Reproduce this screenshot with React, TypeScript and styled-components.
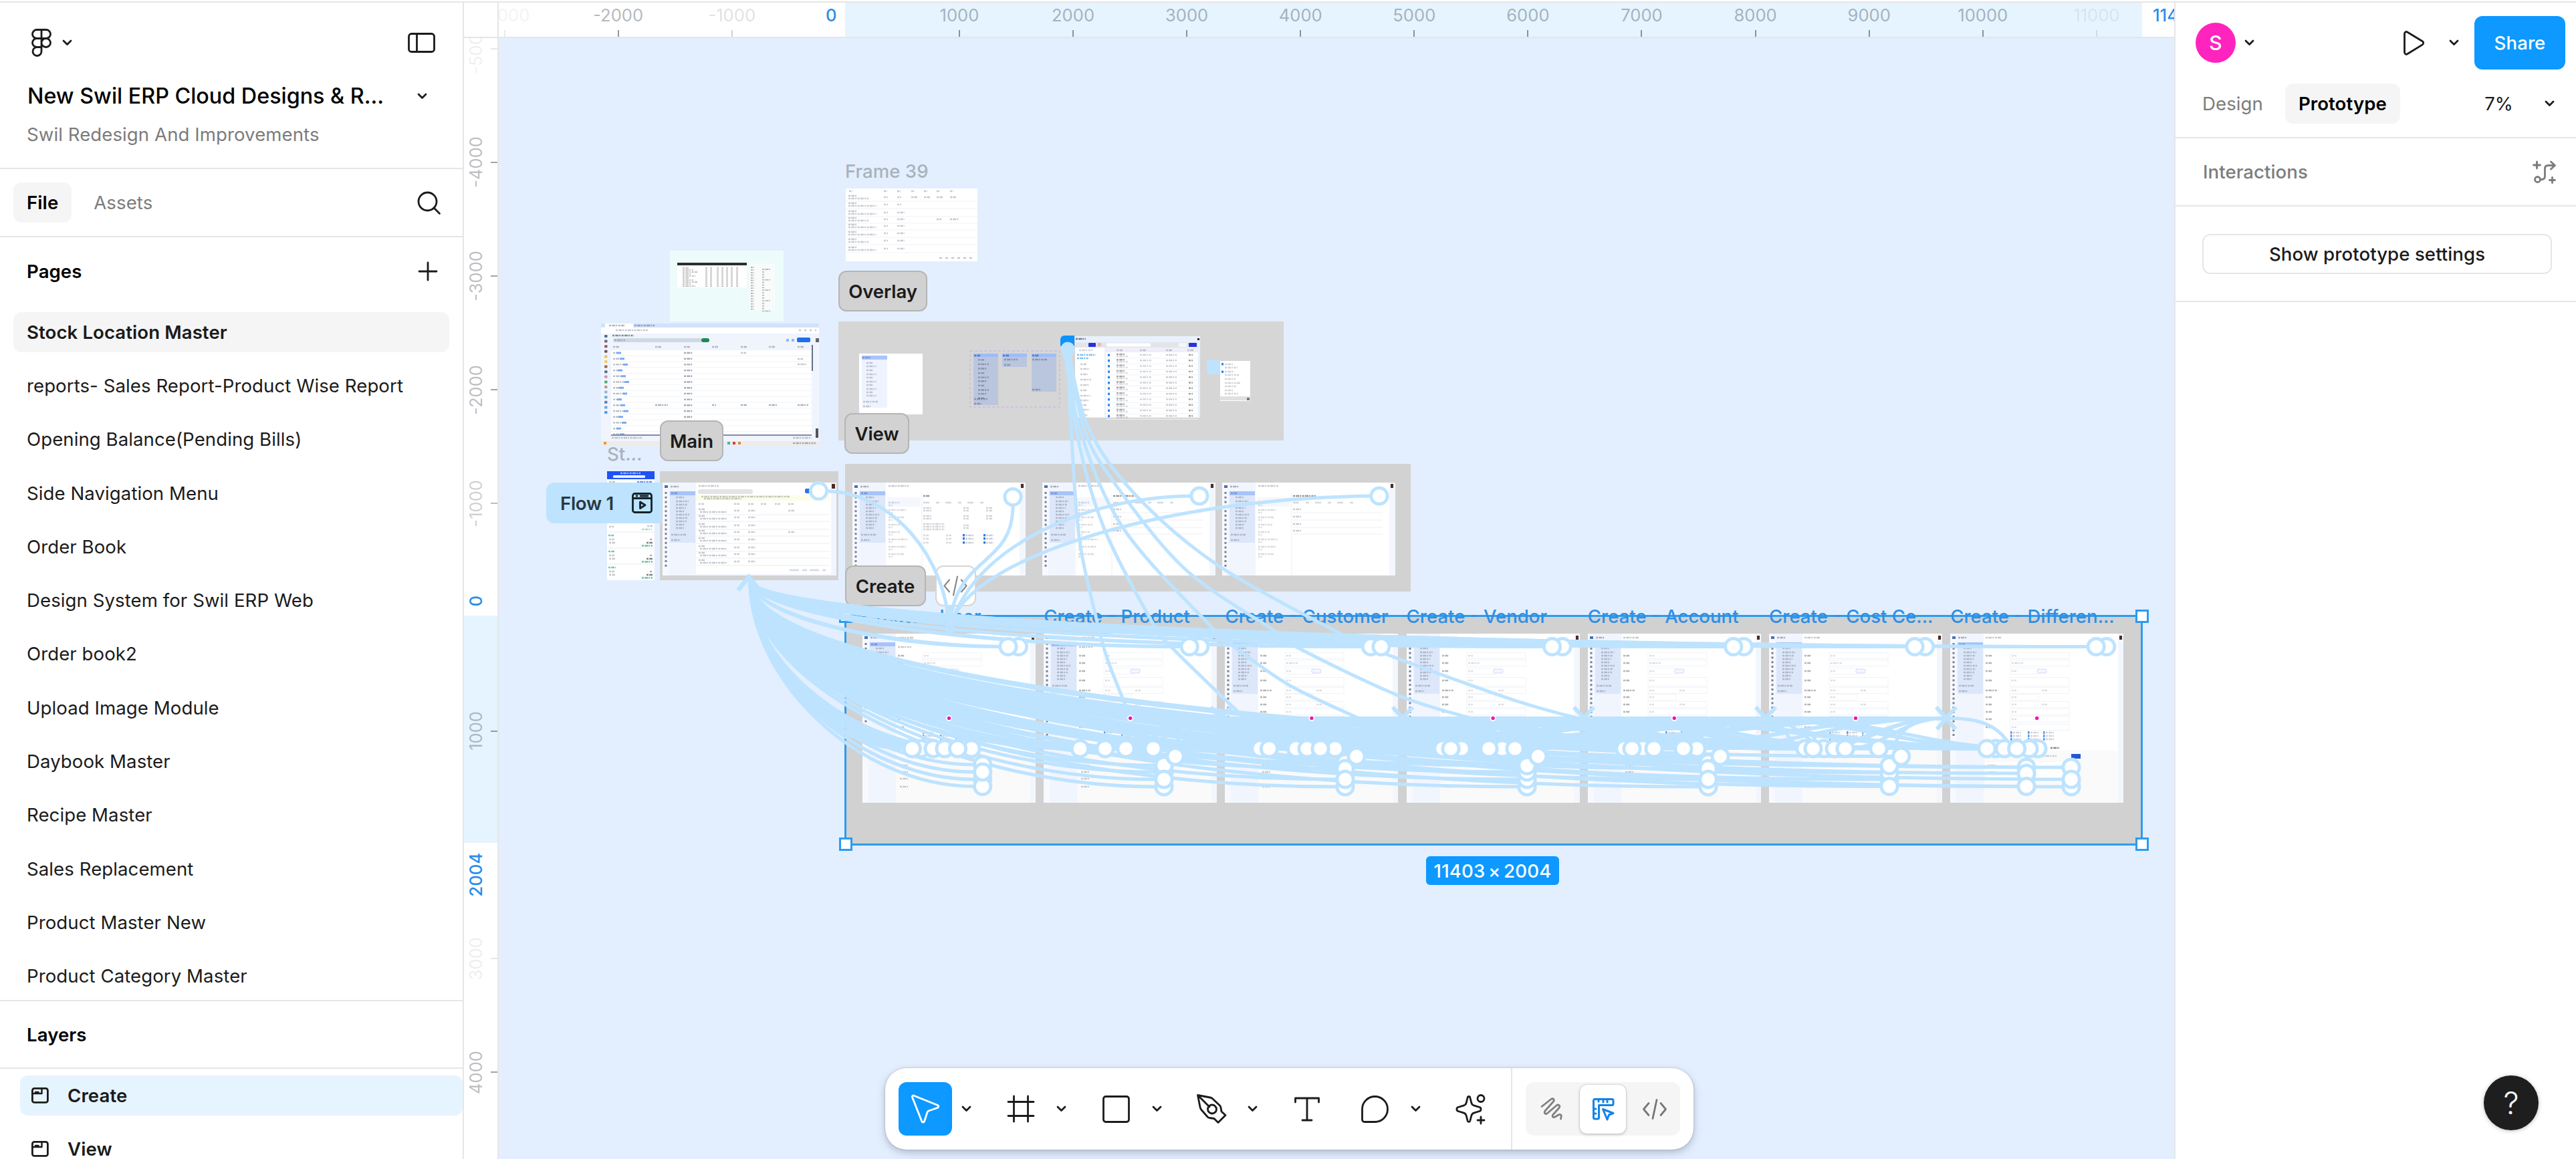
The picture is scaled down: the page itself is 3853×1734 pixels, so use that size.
import React from "react";
import styled, { createGlobalStyle, css } from "styled-components";

const Global = createGlobalStyle`
  *, *::before, *::after { box-sizing: border-box; }
  body { margin: 0; background: #fff; overflow: hidden; }
  button { font: inherit; letter-spacing: inherit; color: inherit; border: 0; padding: 0; background: none; }
`;

const INK = "#1b1b1b";
const MUTED = "#7c7c7c";
const LINE = "#e6e6e6";
const BLUE = "#0d99ff";
const WIRE = "#bde3ff";

/* ---------- shell ---------- */

const Shell = styled.div`
  width: 3853px;
  height: 1734px;
  display: flex;
  flex-direction: column;
  overflow: hidden;
  font-family: Inter, "Liberation Sans", sans-serif;
  font-size: 27.6px;
  letter-spacing: 0.07px;
  color: ${INK};
  background: #fff;
`;

const TopEdge = styled.div`
  height: 4px;
  flex: none;
  border-bottom: 2px solid ${LINE};
`;

const Columns = styled.div`
  flex: 1;
  min-height: 0;
  display: grid;
  grid-template-columns: 694px 2558px 601px;
`;

/* ---------- left panel ---------- */

const LeftPanel = styled.aside`
  display: flex;
  flex-direction: column;
  min-height: 0;
  overflow: hidden;
  border-right: 2px solid ${LINE};
`;

const FileHeader = styled.header`
  height: 249px;
  flex: none;
  padding: 0 41px 0 40px;
  border-bottom: 2px solid ${LINE};
`;

const HeaderRow = styled.div<{ $h: number }>`
  height: ${(p) => p.$h}px;
  display: flex;
  align-items: center;
  justify-content: space-between;
`;

const LogoButton = styled.button`
  display: flex;
  align-items: center;
  gap: 17px;
  padding-left: 7px;
`;

const FileTitle = styled.h1`
  margin: 0 0 0 1px;
  font-size: 32.3px;
  font-weight: 500;
  letter-spacing: 0;
  color: #000;
  white-space: nowrap;
`;

const ChevronSlot = styled.span<{ $r: number }>`
  display: flex;
  margin-right: ${(p) => p.$r}px;
`;

const Subtitle = styled.p`
  margin: 0;
  color: ${MUTED};
`;

const TabRow = styled.nav`
  height: 102px;
  flex: none;
  display: flex;
  align-items: center;
  padding: 0 33px 0 20px;
  border-bottom: 2px solid ${LINE};
`;

const Tab = styled.button<{ $active?: boolean }>`
  height: 60px;
  padding: 0 20px;
  margin-right: 13px;
  border-radius: 12px;
  color: ${MUTED};
  ${(p) =>
    p.$active &&
    css`
      background: #f5f5f5;
      color: #000;
      font-weight: 600;
    `}
`;

const Spacer = styled.span`
  flex: 1;
`;

const SectionTitle = styled.div<{ $h: number; $ruled?: boolean }>`
  height: ${(p) => p.$h}px;
  flex: none;
  display: flex;
  align-items: center;
  justify-content: space-between;
  padding: 0 38px 0 40px;
  font-weight: 600;
  color: #000;
  border-bottom: ${(p) => (p.$ruled ? `2px solid ${LINE}` : "0")};
`;

const PageList = styled.ul`
  list-style: none;
  margin: 0;
  padding: 0 20px;
  height: 1041px;
  flex: none;
  overflow: hidden;
  border-bottom: 2px solid ${LINE};
`;

const PageSlot = styled.li`
  height: 80.3px;
  padding-bottom: 1px;
  display: flex;
  align-items: center;
`;

const PageItem = styled.div<{ $active?: boolean }>`
  flex: 1;
  height: 60px;
  display: flex;
  align-items: center;
  padding: 0 20px;
  border-radius: 12px;
  white-space: nowrap;
  background: ${(p) => (p.$active ? "#f5f5f5" : "transparent")};
  font-weight: ${(p) => (p.$active ? 600 : 400)};
`;

const LayerList = styled.div`
  flex: none;
`;

const LayerSlot = styled.div`
  height: 80px;
  padding: 10px 0 10px 30px;
`;

const LayerItem = styled.div<{ $active?: boolean }>`
  height: 60px;
  display: flex;
  align-items: center;
  gap: 28px;
  padding-left: 17px;
  border-radius: 12px;
  font-weight: 600;
  background: ${(p) => (p.$active ? "#e5f4ff" : "transparent")};
`;

/* ---------- rulers and canvas ---------- */

const Center = styled.main`
  position: relative;
  min-width: 0;
  display: grid;
  grid-template-columns: 52px 1fr;
  grid-template-rows: 53px 1fr;
  overflow: hidden;
`;

const Corner = styled.div`
  border-right: 2px solid ${LINE};
  border-bottom: 2px solid ${LINE};
`;

const TopRuler = styled.div`
  position: relative;
  display: flex;
  overflow: hidden;
  border-bottom: 2px solid ${LINE};
  background: linear-gradient(to right, #fff 518px, #e5f4ff 518px, #e5f4ff 2458px, #fff 2458px);
`;

const SideRuler = styled.div`
  position: relative;
  display: flex;
  flex-direction: column;
  overflow: hidden;
  border-right: 2px solid ${LINE};
  background: linear-gradient(to bottom, #fff 864px, #e5f4ff 864px, #e5f4ff 1204px, #fff 1204px);
`;

const TopMark = styled.span<{ $fade: number; $first?: boolean }>`
  flex: none;
  width: 170.1px;
  margin-left: ${(p) => (p.$first ? "-76.5px" : "0")};
  display: flex;
  flex-direction: column;
  align-items: center;
  justify-content: space-between;
  padding-top: 3px;
  font-size: 25.6px;
  line-height: 31px;
  letter-spacing: 0;
  color: rgba(60, 70, 80, ${(p) => p.$fade});
  &::after {
    content: "";
    width: 2px;
    height: 10px;
    background: rgba(0, 0, 0, ${(p) => p.$fade});
  }
`;

const SideMark = styled.span<{ $fade: number; $first?: boolean }>`
  flex: none;
  height: 170.2px;
  margin-top: ${(p) => (p.$first ? "-69.5px" : "0")};
  display: flex;
  align-items: center;
  justify-content: space-between;
  padding-left: 2px;
  font-size: 25.6px;
  line-height: 31px;
  letter-spacing: 0;
  color: rgba(60, 70, 80, ${(p) => p.$fade});
  &::after {
    content: "";
    width: 10px;
    height: 2px;
    background: rgba(0, 0, 0, ${(p) => p.$fade});
  }
`;

const Upright = styled.span`
  writing-mode: vertical-rl;
  transform: rotate(180deg);
`;

const TopEdgeValue = styled.span<{ $x: number }>`
  position: absolute;
  top: 3px;
  left: ${(p) => p.$x}px;
  font-size: 25.6px;
  line-height: 31px;
  letter-spacing: 0;
  font-weight: 500;
  color: #2a8ee6;
`;

const SideEdgeValue = styled(Upright)<{ $y: number }>`
  position: absolute;
  left: 2px;
  top: ${(p) => p.$y}px;
  font-size: 25.6px;
  line-height: 31px;
  letter-spacing: 0;
  font-weight: 500;
  color: #2a8ee6;
`;

const Canvas = styled.div`
  position: relative;
  overflow: hidden;
  background: #e3effe;
`;

const World = styled.div`
  position: absolute;
  left: -746px;
  top: -57px;
  width: 3853px;
  height: 1734px;
`;

type Box = { $x: number; $y: number; $w?: number; $h?: number };

const Node = styled.div<Box & { $bg?: string }>`
  position: absolute;
  left: ${(p) => p.$x}px;
  top: ${(p) => p.$y}px;
  width: ${(p) => p.$w}px;
  height: ${(p) => p.$h}px;
  background: ${(p) => p.$bg ?? "transparent"};
  svg { display: block; }
`;

const SectionPill = styled.div<Box & { $light?: boolean }>`
  position: absolute;
  left: ${(p) => p.$x}px;
  top: ${(p) => p.$y}px;
  width: ${(p) => p.$w}px;
  height: 61px;
  display: flex;
  align-items: center;
  justify-content: center;
  border-radius: 12px;
  border: 2px solid ${(p) => (p.$light ? "#d5d5d5" : "#b5b5b5")};
  background: ${(p) => (p.$light ? "#fff" : "#d2d2d2")};
  font-weight: 600;
  letter-spacing: -0.1px;
`;

const FrameLabel = styled.span<{ $x: number; $y: number; $on?: boolean }>`
  position: absolute;
  left: ${(p) => p.$x}px;
  top: ${(p) => p.$y}px;
  line-height: 36px;
  white-space: nowrap;
  color: ${(p) => (p.$on ? "#2f8fe3" : "#a9b2bd")};
  font-weight: 500;
  letter-spacing: 0;
`;

const FlowTag = styled.div`
  position: absolute;
  left: 817px;
  top: 722px;
  width: 173px;
  height: 61px;
  display: flex;
  align-items: center;
  justify-content: space-between;
  padding: 0 14px 0 21px;
  border-radius: 12px 0 0 12px;
  background: ${WIRE};
  font-weight: 600;
  letter-spacing: -0.3px;
  color: #2b3740;
`;

const Selection = styled.div`
  position: absolute;
  left: 1263px;
  top: 920px;
  width: 1942px;
  height: 345px;
  border: 3px solid #2b9cf0;
`;

const Handle = styled.i<{ $x: number; $y: number }>`
  position: absolute;
  left: ${(p) => p.$x - 10}px;
  top: ${(p) => p.$y - 10}px;
  width: 20px;
  height: 20px;
  background: #fff;
  border: 3px solid #2b9cf0;
`;

const SizeBadge = styled.div`
  position: absolute;
  left: 2133px;
  top: 1281px;
  width: 199px;
  height: 43px;
  display: flex;
  align-items: center;
  justify-content: center;
  border-radius: 6px;
  background: ${BLUE};
  color: #fff;
  font-weight: 500;
  letter-spacing: 0.15px;
  word-spacing: -3px;
  white-space: nowrap;
`;

/* ---------- toolbar ---------- */

const Toolbar = styled.div`
  position: absolute;
  left: 630px;
  top: 1594px;
  width: 1209px;
  height: 122px;
  display: flex;
  align-items: center;
  padding: 0 19px 0 20px;
  border-radius: 32px;
  background: #fff;
  box-shadow: 0 0 2px rgba(0, 0, 0, 0.25), 0 3px 8px rgba(0, 0, 0, 0.14), 0 6px 16px rgba(40, 70, 110, 0.14);
`;

const Tool = styled.button<{ $active?: boolean }>`
  width: 80px;
  height: 80px;
  flex: none;
  display: grid;
  place-items: center;
  border-radius: 12px;
  background: ${(p) => (p.$active ? BLUE : "transparent")};
`;

const ToolMenu = styled.button`
  width: 40px;
  height: 80px;
  display: grid;
  place-items: center;
  padding-left: 2px;
  margin-right: 22.7px;
`;

const ToolGap = styled.span<{ $w: number }>`
  width: ${(p) => p.$w}px;
  flex: none;
`;

const ToolDivider = styled.span`
  width: 2px;
  height: 122px;
  margin: 0 20px 0 21px;
  background: ${LINE};
`;

const ModeSwitch = styled.div`
  width: 231px;
  height: 80px;
  display: flex;
  align-items: center;
  padding: 0 4px;
  gap: 8px;
  border-radius: 12px;
  background: #f5f5f5;
`;

const Mode = styled.button<{ $active?: boolean }>`
  flex: 1;
  height: 73px;
  display: grid;
  place-items: center;
  border-radius: 10px;
  ${(p) =>
    p.$active &&
    css`
      background: #fff;
      box-shadow: 0 0 2px rgba(0, 0, 0, 0.3), 0 2px 5px rgba(0, 0, 0, 0.15);
    `}
`;

/* ---------- right panel ---------- */

const RightPanel = styled.aside`
  position: relative;
  border-left: 2px solid ${LINE};
`;

const PanelTop = styled.div`
  height: 203px;
  border-bottom: 2px solid ${LINE};
`;

const UserRow = styled.div`
  height: 120px;
  display: flex;
  align-items: center;
  padding: 0 16px 0 30px;
`;

const Avatar = styled.span`
  width: 60px;
  height: 60px;
  margin-right: 14px;
  display: grid;
  place-items: center;
  border-radius: 50%;
  background: #ff24bd;
  color: #fff;
  font-weight: 500;
  font-size: 30px;
`;

const ShareButton = styled.button`
  width: 136px;
  height: 80px;
  margin-left: 24px;
  border-radius: 12px;
  background: ${BLUE};
  color: #fff;
  font-weight: 500;
`;

const ModeRow = styled.div`
  display: flex;
  align-items: center;
  height: 62px;
  padding: 0 33px 0 20px;
`;

const Zoom = styled.span`
  margin-right: 48px;
`;

const PanelRow = styled.div`
  height: 102px;
  display: flex;
  align-items: center;
  justify-content: space-between;
  padding: 0 30px 0 41px;
  font-weight: 450;
  color: ${MUTED};
  border-bottom: 2px solid ${LINE};
`;

const SettingsRow = styled.div`
  height: 143px;
  padding: 41px 36px 0 40px;
  border-bottom: 2px solid ${LINE};
`;

const OutlineButton = styled.button`
  width: 100%;
  height: 60px;
  border: 2px solid ${LINE};
  border-radius: 12px;
  font-weight: 500;
`;

const Help = styled.button`
  position: absolute;
  right: 56px;
  bottom: 43px;
  width: 82px;
  height: 82px;
  display: grid;
  place-items: center;
  border-radius: 50%;
  background: #1e1e1e;
  color: #fff;
  font-size: 46px;
  font-weight: 300;
  box-shadow: 0 1px 6px rgba(0, 0, 0, 0.25);
`;

/* ---------- icons ---------- */

const Icon = ({ w, h, sw = 2.8, color = INK, children }: { w: number; h: number; sw?: number; color?: string; children: React.ReactNode }) => (
  <svg width={w} height={h} viewBox={`0 0 ${w} ${h}`} fill="none" stroke={color} strokeWidth={sw} strokeLinecap="round" strokeLinejoin="round" overflow="visible">
    {children}
  </svg>
);

const Chevron = () => (
  <Icon w={13} h={8} sw={2.8}>
    <path d="M1 1l5.500 5.500L12 1" />
  </Icon>
);

const FigmaMark = () => (
  <Icon w={30} h={42}>
    <path d="M15 1.500H8a6.500 6.500 0 0 0 0 13h7zM15 1.500h7a6.500 6.500 0 0 1 0 13h-7zM15 14.500H8a6.500 6.500 0 0 0 0 13h7zM15 21a6.500 6.500 0 0 1 6.500-6.500h.5a6.500 6.500 0 0 1 0 13h-.5A6.500 6.500 0 0 1 15 21zM15 27.500H8a6.500 6.500 0 1 0 7 6.500z" />
  </Icon>
);

const FrameGlyph = () => (
  <Icon w={26} h={24}>
    <rect x="1.400" y="1.400" width="23" height="21" rx="3" />
    <path d="M6 7h4.500M2 9h13.500V2" strokeWidth="2.400" />
  </Icon>
);

const Wand = () => (
  <Icon w={35} h={35} sw={2.800} color={MUTED}>
    <circle cx="7.500" cy="28.500" r="4" />
    <path d="M12 28.500h1.500c3 0 5-1.500 5-5V12.500c0-3.500 2-5 5-5h9M27.500 2l6 5.500-6 5.500" />
    <path d="M6.500 1l1.500 4.500L12.500 7 8 8.500 6.500 13 5 8.500.5 7 5 5.500z" fill={MUTED} stroke="none" />
    <path d="M6.500 2v10M1.500 7h10M29.500 25.500v8M25.500 29.500h8" />
  </Icon>
);

const CodeGlyph = ({ color = "#777", sw = 2.8 }: { color?: string; sw?: number }) => (
  <Icon w={36} h={31} color={color} sw={sw}>
    <path d="M9 6.500L1.500 15.500 9 24.500M27 6.500l7.500 9-7.500 9M21 1.500l-6 28" />
  </Icon>
);

/* ---------- miniature screens drawn on the canvas ---------- */

const Scribble = ({ x, y, w, c = "#5f6678", o = 0.5, h = 2.4, d = "3 1.2 5 1 2 1.500" }: { x: number; y: number; w: number; c?: string; o?: number; h?: number; d?: string }) => (
  <line x1={x} x2={x + w} y1={y} y2={y} stroke={c} strokeOpacity={o * 0.72} strokeWidth={h} strokeDasharray={d} />
);

const SideMenu = ({ dots }: { dots: number }) => (
  <g>
    <rect x="0" y="0" width="50" height="100%" fill="#f1f5fe" />
    <rect x="0" y="0" width="9" height="100%" fill="#f7f9ff" />
    <rect x="11" y="15" width="38" height="75" fill="#dde7fa" />
    <rect x="11" y="13" width="38" height="6" fill="#a7c3fa" />
    <Scribble x={13} y={16} w={10} c="#2b4a90" />
    {[22, 28, 33, 38, 43, 48, 53, 58, 63, 68].map((y, i) => (
      <Scribble key={y} x={20} y={y} w={12 + ((i * 7) % 9)} o={0.5} />
    ))}
    <Scribble x={13} y={78} w={22} o={0.5} />
    <Scribble x={13} y={86} w={14} o={0.5} />
    <Scribble x={12} y={6} w={13} c="#333" />
    <rect x="3" y="4" width="5" height="4" fill="#2c5d9b" opacity="0.85" />
    {Array.from({ length: dots }, (_, i) => (
      <rect key={i} x="3.500" y={14 + i * 6.800} width="3" height="3" fill="#33415c" opacity="0.65" />
    ))}
  </g>
);

const ViewScreen = ({ v }: { v: number }) => (
  <svg width="259" height="139">
    <rect width="259" height="139" fill="#fff" />
    <SideMenu dots={17} />
    <rect x="250" width="9" height="139" fill="#f3f6fd" />
    <rect x="252" y="2" width="4" height="6" fill="#4a2b24" />
    <Scribble x={54} y={5} w={30} />
    <line x1="104" x2="104" y1="16" y2="139" stroke="#eceef2" />
    <rect x="52" y="22" width="50" height="14" fill="#f5f7fc" />
    {[30, 41, 52, 63, 74, 85, 96, 107].map((y, i) => (
      <g key={y}>
        <Scribble x={54} y={y} w={16 + ((i * 11) % 14)} o={0.35} c={i === 0 ? "#2a6be0" : "#5f6678"} />
        <Scribble x={54} y={y + 4} w={6} o={0.3} />
      </g>
    ))}
    <Scribble x={106} y={20} w={v === 0 ? 10 : 34} o={0.7} c="#333" />
    <Scribble x={106} y={30} w={98} o={0.35} d="9 10 5 9" />
    {v === 0 ? (
      <g>
        {[38, 42, 50, 54, 62, 66, 70].map((y) => (
          <Scribble key={y} x={106} y={y} w={y > 60 ? 32 : 12} o={0.4} />
        ))}
        {[38, 42, 50, 54, 64, 68].map((y) => (
          <Scribble key={y} x={166} y={y} w={8} o={0.4} />
        ))}
        {[38, 42, 50, 54].map((y) => (
          <Scribble key={y} x={200} y={y} w={9} o={0.4} />
        ))}
        {[79, 84, 90].map((y) => (
          <g key={y}>
            <rect x="165" y={y - 2} width="3" height="3.500" fill="#2d7be0" />
            <Scribble x={169} y={y} w={13} o={0.45} />
            <rect x="196" y={y - 2} width="3" height="3.500" fill="#2d7be0" />
            <Scribble x={200} y={y} w={11} o={0.45} />
            <Scribble x={106} y={y} w={8} o={0.35} />
            <Scribble x={140} y={y} w={8} o={0.35} />
          </g>
        ))}
      </g>
    ) : (
      [40, 51, 62, 72].map((y) => (
        <g key={y}>
          <Scribble x={106} y={y} w={12} o={0.45} />
          <line x1="106" x2="240" y1={y + 5} y2={y + 5} stroke="#eef0f3" />
        </g>
      ))
    )}
  </svg>
);

const CreateScreen = ({ last }: { last?: boolean }) => (
  <svg width="259" height="253">
    <rect width="259" height="253" fill="#fff" />
    <rect y="175" width="259" height="78" fill="#fafafa" />
    <SideMenu dots={21} />
    <rect x="251" width="8" height="253" fill="#f3f6fd" />
    <rect x="253" y="3" width="4" height="6" fill="#4a2b24" />
    <Scribble x={53} y={6} w={24} />
    <Scribble x={53} y={20} w={20} />
    {[33, 44, 56, 70, 85, 95, 106, 117, 128, 140].map((y, i) => (
      <g key={y}>
        <Scribble x={53} y={y} w={i === 4 ? 18 : 10} o={0.5} c="#333" />
        <rect x="90" y={y - 4.500} width={i === 2 || i === 5 ? 42 : 88} height={i === 3 ? 13 : 9} fill="none" stroke="#f1f3f6" />
        <Scribble x={92} y={y} w={i === 1 ? 18 : 7} o={0.3} />
        {(i === 4 || i === 6) && <Scribble x={137} y={y} w={8} o={0.3} />}
      </g>
    ))}
    <rect x="130" y="53" width="14" height="6" rx="2" fill="#f4f6ff" stroke="#c6d2fa" strokeWidth="0.800" />
    {[148, 153, 158].map((y) => (
      <g key={y}>
        {[90, 116, 139].map((x) => (
          <g key={x}>
            <rect x={x} y={y - 2} width="2.500" height="4" fill="#3280e4" opacity="0.8" />
            <Scribble x={x + 4} y={y} w={12} o={0.4} />
          </g>
        ))}
      </g>
    ))}
    {last && (
      <g>
        <Scribble x={150} y={171} w={14} o={0.8} c="#334" />
        <Scribble x={125} y={183} w={34} o={0.4} />
        <rect x="181" y="180" width="14" height="7" fill="#2257d8" />
        <rect x="53" y="192" width="130" height="30" fill="#fff" />
      </g>
    )}
    {[197, 207, 217, 229].map((y) => (
      <Scribble key={y} x={56} y={y} w={12} o={0.45} />
    ))}
  </svg>
);

const MainScreen = () => (
  <svg width="260" height="139">
    <rect width="260" height="139" fill="#f1f5fe" />
    <SideMenu dots={17} />
    <rect x="50" y="0" width="202" height="137" fill="#fff" />
    <rect x="253" y="2" width="5" height="7" fill="#4a2b24" />
    <Scribble x={54} y={5} w={30} />
    <rect x="53" y="10" width="82" height="7" rx="3" fill="#e4e4e6" />
    <rect x="213" y="9" width="14" height="7" rx="2" fill="#2f6ff0" />
    <rect x="50" y="19" width="200" height="8" fill="#fcfde6" />
    <Scribble x={58} y={21} w={132} />
    <Scribble x={62} y={24} w={56} />
    {[54, 107, 128, 147, 168, 188].map((x) => (
      <Scribble key={x} x={x} y={32} w={8} o={0.45} />
    ))}
    {[42, 52, 64, 74, 85, 97, 107, 118].map((y, i) => (
      <g key={y}>
        <Scribble x={54} y={y - 2} w={10} o={0.5} />
        <Scribble x={56} y={y + 2} w={40} o={0.5} />
        <Scribble x={107} y={y} w={8} o={0.45} />
        <Scribble x={128} y={y} w={11} o={0.45} />
        {(i === 0 || i === 3) && <Scribble x={188} y={y} w={10} o={0.45} />}
        <line x1="50" x2="250" y1={y + 6} y2={y + 6} stroke="#e9edf2" />
      </g>
    ))}
    <Scribble x={190} y={131} w={54} o={0.35} d="14 5 7 4" />
  </svg>
);

const appIcons = ["#31518c", "#556", "#9a3d3d", "#445", "#f0b93a", "#f4c443", "#8a4f2c", "#3a5a86", "#d87aa6", "#3e9c62", "#b48a6a", "#7ab0d8", "#5aa0c8", "#556a9a", "#5a9ad8", "#2a92e8"];

const BrowserShot = () => (
  <svg width="326" height="182">
    <rect width="326" height="182" fill="#f0f4fd" />
    <rect width="326" height="6" fill="#d2e2fc" />
    <rect x="6" y="0" width="42" height="6" fill="#fff" />
    <rect y="6" width="326" height="9" fill="#fff" />
    <Scribble x={12} y={3} w={24} c="#334" />
    <Scribble x={50} y={3} w={30} c="#334" />
    <Scribble x={22} y={10} w={48} />
    <Scribble x={296} y={10} w={26} d="3 5" />
    <Scribble x={17} y={18} w={32} c="#223" o={0.7} />
    <rect x="18" y="22" width="134" height="6" rx="3" fill="#cfd9e4" />
    <Scribble x={20} y={25} w={16} />
    <rect x="150" y="22" width="12" height="6" rx="3" fill="#1c8a52" />
    <rect x="293" y="21" width="20" height="7" rx="2" fill="#1f6df0" />
    <rect x="277" y="23" width="4" height="4" fill="#8fb7f7" />
    <rect x="285" y="23" width="4" height="4" fill="#8fb7f7" />
    <rect x="15" y="40" width="300" height="127" fill="#fff" />
    {[18, 81, 124, 166, 209, 251, 294].map((x) => (
      <Scribble key={x} x={x} y={35} w={9} o={0.6} />
    ))}
    {Array.from({ length: 15 }, (_, i) => {
      const y = 44 + i * 8.700;
      const a = 5 + ((i * 5) % 13);
      return (
        <g key={i}>
          <Scribble x={18} y={y} w={a} o={0.6} />
          <rect x={18 + a} y={y - 1.500} width="7" height="3" fill="#2f7df0" opacity="0.65" />
          {i < 12 && <Scribble x={124} y={y} w={13} o={0.75} />}
          <line x1="15" x2="315" y1={y + 4.300} y2={y + 4.300} stroke="#f1f3f6" />
        </g>
      );
    })}
    <Scribble x={209} y={44} w={8} />
    <Scribble x={294} y={53} w={8} />
    <Scribble x={294} y={61} w={14} />
    {[81, 166, 209, 251, 294].map((x, i) => (
      <Scribble key={x} x={x} y={122} w={[19, 6, 9, 12, 16][i]} o={0.7} />
    ))}
    <rect x="15" y="166" width="300" height="2" fill="#7f8ba8" />
    <rect x="315" y="32" width="2" height="39" fill="#61718e" />
    <rect x="321" y="22" width="5" height="6" fill="#666" />
    <rect x="321" y="157" width="4" height="14" fill="#555" />
    <Scribble x={16} y={171} w={46} />
    <Scribble x={287} y={171} w={28} />
    <rect y="176" width="326" height="6" fill="#efece8" />
    <rect x="4" y="177" width="4" height="4" fill="#f09a2a" />
    {["#3bb", "#c43", "#d84"].map((c, i) => (
      <rect key={c} x={189 + i * 8} y="177" width="4" height="4" fill={c} />
    ))}
    <Scribble x={287} y={179} w={34} c="#333" />
    {appIcons.map((c, i) => (
      <rect key={i} x="5" y={17 + i * 7.600} width="4.500" height="4" rx="1" fill={c} opacity="0.85" />
    ))}
  </svg>
);

const MintSheet = () => (
  <svg width="170" height="106">
    <rect width="170" height="106" fill="#edfcfb" />
    <rect x="11" y="18" width="104" height="37" fill="#fff" />
    <rect x="11" y="18" width="104" height="4" fill="#2e2e2e" />
    {[26, 29, 32, 35, 38, 41, 44, 47, 50, 53].map((y, i) => (
      <g key={y}>
        <Scribble x={19} y={y} w={10 + ((i * 6) % 15)} h={1.600} c="#333" o={0.55} />
        {[53, 60, 70, 77, 84, 91, 99].map((x) => (
          <Scribble key={x} x={x} y={y} w={4} h={1.600} c="#333" o={0.5} />
        ))}
      </g>
    ))}
    <rect x="119" y="19" width="38" height="70" fill="#f9fbfa" />
    {Array.from({ length: 17 }, (_, i) => (
      <g key={i}>
        <Scribble x={121} y={25 + i * 3.900} w={5} h={1.800} o={0.5} c="#333" />
        <Scribble x={138} y={28 + i * 3.900} w={i % 4 === 0 ? 12 : 4} h={1.800} c="#333" o={0.45} />
      </g>
    ))}
  </svg>
);

const TableSheet = () => (
  <svg width="197" height="109">
    <rect width="197" height="109" fill="#fff" />
    {[5, 57, 77, 98, 117, 136, 156].map((x) => (
      <Scribble key={x} x={x} y={4} w={5} o={0.5} />
    ))}
    {[13, 24, 36, 46, 56, 67, 78, 90].map((y, i) => (
      <g key={y}>
        <Scribble x={4} y={y - 2} w={12} o={0.5} />
        <Scribble x={4} y={y + 2} w={i % 3 ? 42 : 30} o={0.45} />
        <Scribble x={57} y={y} w={6} o={0.45} />
        <Scribble x={77} y={y} w={i > 1 ? 11 : 6} o={0.45} />
        <line x1="0" x2="197" y1={y + 6} y2={y + 6} stroke="#f0f2f5" />
      </g>
    ))}
    {[98, 117, 136, 156].map((x) => (
      <Scribble key={x} x={x} y={13} w={9} o={0.5} />
    ))}
    <Scribble x={136} y={46} w={7} />
    <Scribble x={156} y={46} w={13} />
    <Scribble x={140} y={104} w={52} o={0.5} d="4 5" />
  </svg>
);

const PhoneScreen = () => (
  <svg width="71" height="163">
    <rect width="71" height="163" fill="#fff" />
    <rect width="71" height="12" fill="#1f51f4" />
    <rect x="9" y="6" width="48" height="4" rx="1.500" fill="#eaf0ff" />
    <Scribble x={20} y={3} w={30} c="#fff" o={0.8} />
    <Scribble x={3} y={16} w={9} />
    <Scribble x={45} y={16} w={22} c="#1f51f4" o={0.9} />
    {[80, 104, 128].map((y, i) => (
      <g key={y}>
        <Scribble x={2} y={y + 16} w={[8, 9, 11][i]} c="#179c7a" o={0.8} />
        <Scribble x={3} y={y + 22} w={8} />
        <Scribble x={64} y={y + 22} w={4} c="#222" />
        <Scribble x={3} y={y + 27} w={9} />
        <Scribble x={59} y={y + 27} w={9} c="#222" o={0.8} />
        <Scribble x={52} y={y + 31.500} w={16} c="#179c7a" o={0.9} />
        <line x1="0" x2="71" y1={y + 11} y2={y + 11} stroke="#e8ecf0" />
      </g>
    ))}
    <Scribble x={3} y={83} w={7} />
    <Scribble x={60} y={82} w={8} />
    <Scribble x={52} y={87} w={15} c="#179c7a" />
  </svg>
);

const menuLines = [11, 18, 25, 32, 39, 45, 52, 59, 65, 72];

const OverlayParts = () => (
  <svg width="666" height="178">
    <rect x="31" y="48" width="95" height="91" fill="#fff" />
    <rect x="35" y="51" width="38" height="78" fill="#eef3ff" />
    <rect x="35" y="51" width="38" height="6" rx="1" fill="#a9c4fb" />
    <Scribble x={36} y={54} w={12} c="#2b4a90" />
    {[62, 67, 73, 79, 84, 90, 95, 101, 106, 111].map((y, i) => (
      <Scribble key={y} x={42} y={y} w={10 + ((i * 5) % 10)} o={0.45} />
    ))}
    <Scribble x={37} y={120} w={22} o={0.45} />
    <Scribble x={37} y={127} w={11} o={0.45} />
    <rect x="197" y="44" width="134" height="84" fill="none" stroke="#c3aede" strokeWidth="1" strokeDasharray="4 3" />
    {[
      [202, 77],
      [245, 20],
      [289, 57],
    ].map(([x, h]) => (
      <g key={x}>
        <rect x={x} y="48" width="37" height={h} rx="1" fill="#bac6de" />
        <rect x={x} y="48" width="37" height="5" rx="1" fill="#9dbdf8" />
        <Scribble x={x + 1} y={51} w={10} c="#223a78" o={0.7} />
      </g>
    ))}
    {menuLines.map((y, i) => (
      <Scribble key={y} x={209} y={47 + y * 0.940} w={10 + ((i * 6) % 9)} c="#333f5a" />
    ))}
    <Scribble x={203} y={116} w={20} c="#333f5a" />
    <Scribble x={203} y={123} w={11} c="#333f5a" />
    <Scribble x={248} y={57} w={20} c="#333f5a" />
    <Scribble x={248} y={65} w={10} c="#333f5a" />
    <Scribble x={290} y={57} w={22} c="#333f5a" />
    <Scribble x={290} y={102} w={12} c="#333f5a" />
    <rect x="354" y="22" width="187" height="122" fill="#e9f1fe" />
    <rect x="354" y="31" width="184" height="8" fill="#e4e5ea" />
    <Scribble x={355} y={26} w={15} c="#223" o={0.8} />
    <rect x="374" y="32" width="11" height="6" rx="1" fill="#2433e0" />
    <rect x="401" y="32.500" width="66" height="5" rx="1" fill="#fff" />
    <rect x="388" y="32" width="5" height="5" fill="#f0b8b4" />
    <rect x="509" y="32" width="12" height="6" fill="#effaf3" />
    <rect x="524" y="32" width="12" height="6" rx="1" fill="#2433e0" />
    <rect x="537" y="25" width="3" height="3" fill="#222" />
    <rect x="354" y="39" width="44" height="104" fill="#fff" />
    <rect x="400" y="39" width="138" height="104" fill="#fff" />
    <rect x="400" y="39" width="138" height="7" fill="#efeffa" />
    <Scribble x={360} y={43} w={20} o={0.4} />
    <Scribble x={357} y={50} w={28} c="#2590e8" o={0.8} />
    <Scribble x={357} y={55} w={17} c="#2590e8" o={0.8} />
    {[64, 71, 79, 87, 95, 103, 111, 118, 125, 132, 140].map((y, i) => (
      <Scribble key={y} x={362} y={y} w={9 + ((i * 5) % 8)} o={0.45} />
    ))}
    {[416, 451, 490, 522].map((x) => (
      <Scribble key={x} x={x} y={43} w={9} />
    ))}
    {Array.from({ length: 12 }, (_, i) => {
      const y = 50 + i * 8.300;
      return (
        <g key={i}>
          <rect x="403" y={y - 1.500} width="3" height="3.500" fill="#2a86e8" />
          <Scribble x={416} y={y - 1} w={12} c="#333" o={0.6} />
          <Scribble x={416} y={y + 2} w={18} o={0.35} />
          <Scribble x={451} y={y} w={17} o={0.4} />
          <Scribble x={490} y={y} w={16} o={0.45} />
          <Scribble x={524} y={y} w={6} c="#222" o={0.6} />
          <line x1="400" x2="538" y1={y + 5} y2={y + 5} stroke="#f0f2f5" />
        </g>
      );
    })}
    <path d="M332 37V27a6 6 0 0 1 6-6h15v16z" fill="#0d93fb" />
    <rect x="551" y="58" width="22" height="21" rx="4" fill={WIRE} />
    <rect x="571" y="59" width="45" height="60" fill="#fff" />
    <rect x="571" y="112" width="45" height="6" fill="#e0e0e2" />
    {[64, 69, 75, 80, 86, 92, 97, 103, 108].map((y, i) => (
      <Scribble key={y} x={578} y={y} w={12 + ((i * 7) % 12)} o={0.4} />
    ))}
    <rect x="573" y="62" width="3" height="3.500" fill="#2a86e8" />
    <rect x="573" y="73.500" width="3" height="3.500" fill="#2a86e8" />
    <rect x="611" y="114" width="4" height="4" fill="#777" />
  </svg>
);

/* ---------- prototype wires ---------- */

type Pt = [number, number];

const noodleFromMain = ([x, y]: Pt) => {
  const sx = 1122;
  const sy = 868;
  const dx = x - 13 - sx;
  const k = dx > 800 ? 0.6 : 0.5;
  return `M${sx} ${sy}C${sx} ${sy + k * (y - sy)} ${sx + dx / 2} ${y} ${x - 13} ${y}`;
};

const spline = (pts: Pt[]) => {
  let d = `M${pts[0][0]} ${pts[0][1]}`;
  for (let i = 0; i < pts.length - 1; i++) {
    const p0 = pts[i - 1] ?? pts[i];
    const p1 = pts[i];
    const p2 = pts[i + 1];
    const p3 = pts[i + 2] ?? p2;
    d += `C${p1[0] + (p2[0] - p0[0]) / 6} ${p1[1] + (p2[1] - p0[1]) / 6} ${p2[0] - (p3[0] - p1[0]) / 6} ${p2[1] - (p3[1] - p1[1]) / 6} ${p2[0]} ${p2[1]}`;
  }
  return d;
};

const PITCH = 271.2;
const frameX = (i: number) => 1290 + i * PITCH;

const rowXs: number[][] = [
  [1378, 1396, 1453, 1413, 1432.500, 1364.400],
  [1615.400, 1653, 1684, 1725],
  [1885, 1898.400, 1938.600, 1997, 1955, 1975],
  [2158, 2186, 2170, 2247, 2227, 2266],
  [2430, 2457, 2441, 2474, 2538, 2518],
  [2700, 2728, 2712, 2744, 2760, 2810],
  [2985, 2972, 3048, 3035, 2998, 3016.600],
];

const columns: Pt[][] = [
  [[1469.700, 1144], [1469.700, 1166], [1469.700, 1176.500], [1469.700, 1155]],
  [[1741, 1155], [1741, 1145], [1758, 1131.600], [1741, 1177], [1741, 1166]],
  [[2012, 1141], [2012, 1150], [2029, 1131.600], [2012, 1177], [2012, 1166]],
  [[2284, 1177], [2284, 1166], [2284, 1155], [2284, 1145.500], [2300.700, 1131.600]],
  [[2555, 1141], [2555, 1150], [2573, 1131.600], [2555, 1177], [2555, 1166]],
  [[2826, 1166], [2826, 1156], [2826, 1145.500], [2843.600, 1131.600], [2826, 1176.500]],
  [[3031, 1148], [3031, 1157], [3031, 1176.500], [3098, 1148], [3098, 1177], [3098, 1166]],
];

const topPairs: Pt[] = Array.from({ length: 7 }, (_, i): Pt[] => {
  const a: Pt = [1508 + i * PITCH, 967.500];
  const b: Pt = [1523.500 + i * PITCH, 967.500];
  return i === 2 ? [a, b] : [b, a];
}).flat();

const rowPts: Pt[] = rowXs.flat().map((x): Pt => [x, 1120]);
const mainTargets: Pt[] = [...topPairs, ...rowPts, ...columns.flat()];

const gaps = [1826, 2098, 2369, 2641, 2911];

/* wires that rise from the lower row of hotspots to the left edge of a frame */
const edgeWires: string[] = [];
rowXs.forEach((xs, i) => {
  gaps.forEach((gx, g) => {
    const span = i - (g + 1);
    if (Math.abs(span) > 3 || i === 0) return;
    xs.forEach((x, n) => {
      if (i === 6 && (g === 4 || n % 3 !== 0)) return;
      if (g === 4 && n % 2 !== 0) return;
      if (g === 3 && i >= 5 && n % 3 !== 0) return;
      const d = gx - x;
      edgeWires.push(`M${x} 1120C${x + d * 0.400} 1120 ${gx - d * 0.450} 1074 ${gx} 1074.500`);
    });
  });
});

const fan: Pt[][] = [
  [[1597, 522], [1602, 640], [1614, 803], [1638, 918], [1656, 985], [1691, 1074]],
  [[1597, 522], [1609, 640], [1650, 787], [1723, 930], [1754, 970], [1861, 1074]],
  [[1597, 522], [1614.500, 640], [1680, 790], [1812, 938], [1849, 970], [1930, 1026], [2031, 1074]],
  [[1597, 522], [1621, 640], [1665, 720], [1771, 850], [1902, 941], [1943, 970], [2090, 1040], [2198, 1074]],
  [[1597, 522], [1628, 640], [1699, 741], [1822, 846], [2001, 946], [2069, 977], [2260, 1046], [2365, 1076]],
];

const viewWires = [
  "M1239 735C1330 737 1418 830 1420 948",
  "M1515 758C1515 850 1422 830 1420 948",
  "M1780 742C1600 745 1440 835 1420 948",
  "M2049 742C1735 745 1425 840 1420 948",
];

const viewHotspots: Pt[] = [
  [1224.500, 734.500],
  [1515, 743.500],
  [1794, 742],
  [2063, 742],
];

const Hotspot = ({ p: [x, y] }: { p: Pt }) => <circle cx={x} cy={y} r="12.200" fill="#fff" stroke={WIRE} strokeWidth="4.800" />;

const Wires = () => (
  <svg width="3853" height="1734" fill="none" stroke={WIRE} strokeWidth="5">
    {fan.map((pts, i) => (
      <path key={i} d={spline(pts)} />
    ))}
    <path d="M1588 520c2 8 6 22 6 40h6c0-18 5-32 7-40z" fill={WIRE} stroke="none" />
    <circle cx="1597" cy="522" r="10.500" fill={WIRE} stroke="none" />
    {viewWires.map((d) => (
      <path key={d} d={d} />
    ))}
    <path d="M1420 905v42" strokeWidth="12" />
    {mainTargets.map((p, i) => (
      <path key={i} d={noodleFromMain(p)} />
    ))}
    {edgeWires.map((d, i) => (
      <path key={i} d={d} />
    ))}
    <path d="M1786 1072H2369V1088H1830z" fill={WIRE} stroke="none" />
    <path d="M2369 1072H2641V1079C2520 1083 2450 1090 2369 1092z" fill={WIRE} stroke="none" />
    <path d="M2641 1074.500H2911M2836 1109C2848 1085 2870 1075 2911 1074.500M2911 1074.500C2960 1074 2985 1085 3002 1108" />
    <path d="M2641 1074.500C2760 1080 2830 1112 2972 1117M2700 1090L2716 1106M2551 1094C2575 1082 2600 1079 2641 1078" />
    <path d="M1104 883l16-20 16 20" strokeWidth="6.500" />
    {gaps.map((x) => (
      <path key={x} d={`M${x - 15} 1058l15 16 15-16`} strokeWidth="6" />
    ))}
    <path d="M2897 1091l14-16 14 16" strokeWidth="6" />
    {topPairs.map((p, i) => (
      <Hotspot key={i} p={p} />
    ))}
    {rowPts.map((p, i) => (
      <Hotspot key={i} p={p} />
    ))}
    {columns.flat().map((p, i) => (
      <Hotspot key={i} p={p} />
    ))}
    {viewHotspots.map((p, i) => (
      <Hotspot key={i} p={p} />
    ))}
    {Array.from({ length: 7 }, (_, i) => (
      <circle key={i} cx={1419.500 + i * PITCH} cy="1074.500" r="3.600" fill="#f018a8" stroke="#fff" strokeWidth="1.800" />
    ))}
  </svg>
);

/* ---------- data ---------- */

const pages = [
  "Stock Location Master",
  "reports- Sales Report-Product Wise Report",
  "Opening Balance(Pending Bills)",
  "Side Navigation Menu",
  "Order Book",
  "Design System for Swil ERP Web",
  "Order book2",
  "Upload Image Module",
  "Daybook Master",
  "Recipe Master",
  "Sales Replacement",
  "Product Master New",
  "Product Category Master",
];

const topMarks: [string, number][] = [
  ["-3000", 0.08],
  ["-2000", 0.4],
  ["-1000", 0.18],
  ["", 0],
  ...Array.from({ length: 10 }, (_, i): [string, number] => [`${(i + 1) * 1000}`, 0.4]),
  ["11000", 0.1],
];

const sideMarks: [string, number][] = [
  ["-5000", 0.09],
  ["-4000", 0.36],
  ["-3000", 0.36],
  ["-2000", 0.36],
  ["-1000", 0.26],
  ["", 0],
  ["1000", 0.36],
  ["", 0],
  ["3000", 0.1],
  ["4000", 0.36],
];

const createLabels = ["Create - User", "Create - Product", "Create - Customer", "Create - Vendor", "Create - Account", "Create - Cost Ce...", "Create - Differen..."];

/* ---------- page ---------- */

const Sidebar = () => (
  <LeftPanel>
    <FileHeader>
      <HeaderRow $h={120}>
        <LogoButton>
          <FigmaMark />
          <Chevron />
        </LogoButton>
        <Icon w={41} h={30}>
          <rect x="1.500" y="1.500" width="38" height="27" rx="4" />
          <path d="M13.500 2v26" />
        </Icon>
      </HeaderRow>
      <HeaderRow $h={39}>
        <FileTitle>New Swil ERP Cloud Designs &amp; R...</FileTitle>
        <ChevronSlot $r={13}>
          <Chevron />
        </ChevronSlot>
      </HeaderRow>
      <HeaderRow $h={75}>
        <Subtitle>Swil Redesign And Improvements</Subtitle>
      </HeaderRow>
    </FileHeader>
    <TabRow>
      <Tab $active>File</Tab>
      <Tab>Assets</Tab>
      <Spacer />
      <Icon w={35} h={35}>
        <circle cx="15.500" cy="15.500" r="13.500" />
        <path d="M25 25l8.500 8.500" />
      </Icon>
    </TabRow>
    <SectionTitle $h={102}>
      Pages
      <Icon w={28} h={28}>
        <path d="M14 1v26M1 14h26" />
      </Icon>
    </SectionTitle>
    <PageList>
      {pages.map((name, i) => (
        <PageSlot key={name}>
          <PageItem $active={i === 0}>{name}</PageItem>
        </PageSlot>
      ))}
    </PageList>
    <SectionTitle $h={101} $ruled>
      Layers
    </SectionTitle>
    <LayerList>
      {["Create", "View"].map((name, i) => (
        <LayerSlot key={name}>
          <LayerItem $active={i === 0}>
            <FrameGlyph />
            {name}
          </LayerItem>
        </LayerSlot>
      ))}
    </LayerList>
  </LeftPanel>
);

const Tools = () => (
  <Toolbar>
    <Tool $active>
      <Icon w={44} h={44} color="#fff">
        <path d="M2.500 4.500C2 2.800 3.400 1.600 5 2.200L40.500 16.500c1.800.8 1.700 3.200-.2 3.900L27 25c-1 .4-1.600 1-2 2l-4.300 13.500c-.6 1.900-3.200 2-3.900.2z" />
      </Icon>
    </Tool>
    <ToolMenu><Chevron /></ToolMenu>
    <Tool>
      <Icon w={40} h={40}>
        <path d="M9.500 1v38M30.500 1v38M1 9.500h38M1 30.500h38" />
      </Icon>
    </Tool>
    <ToolMenu><Chevron /></ToolMenu>
    <Tool>
      <Icon w={41} h={41}>
        <rect x="1.500" y="1.500" width="38" height="38" rx="3.500" />
      </Icon>
    </Tool>
    <ToolMenu><Chevron /></ToolMenu>
    <Tool>
      <Icon w={46} h={46}>
        <path d="M2.500 2.500l18.500 3.500c1.500.3 2.800 1 3.900 2L35.500 18c.8.800 1.300 1.800 1.500 2.900L38 27l6 5.500-11 11-6-6-7-1c-1-.200-2-.700-2.800-1.500L8 24.500c-.9-1-1.600-2.300-1.900-3.700zM2.500 2.500L20 20" />
        <circle cx="24" cy="23.500" r="6.500" />
      </Icon>
    </Tool>
    <ToolMenu><Chevron /></ToolMenu>
    <Tool>
      <Icon w={38} h={37}>
        <path d="M1.500 8V2h35v6M19 2v33M12 35h14" />
      </Icon>
    </Tool>
    <ToolGap $w={22} />
    <Tool>
      <Icon w={41} h={41}>
        <path d="M1.500 20.500a19 19 0 1 1 19 19H5a3.500 3.500 0 0 1-3.500-3.500z" />
      </Icon>
    </Tool>
    <ToolMenu><Chevron /></ToolMenu>
    <Tool>
      <Icon w={45} h={45}>
        <path d="M20 3.500c1.200 0 1.800.9 2 2l1.700 7c.5 2.300 2.100 4 4.400 4.600L36 19.500c2.800.8 2.800 5.200 0 6l-7.900 2.300c-2.300.6-3.900 2.400-4.400 4.700L22 39.500c-.7 2.600-3.300 2.600-4 0l-1.700-7c-.5-2.300-2.100-4.100-4.400-4.700L4 25.500c-2.800-.8-2.800-5.200 0-6l7.900-2.400c2.300-.6 3.900-2.300 4.400-4.600l1.700-7c.2-1.100.8-2 2-2z" />
        <circle cx="38" cy="6.500" r="5" />
        <path d="M38 34v10M33 39h10" />
      </Icon>
    </Tool>
    <ToolDivider />
    <ModeSwitch>
      <Mode>
        <Icon w={34} h={34} color="#808080">
          <path d="M2 13.500L16 2.500c3.500-2 5.500 1 3.500 3.500L7 20c-2 3 .5 6 3.500 3.500L24 12c3.500-2.500 6 .5 4 3.500l-9 10c-2 3 0 5 3 3.500l5-3c3-1.500 5 0 4 3l-.5 3" />
        </Icon>
      </Mode>
      <Mode $active>
        <Icon w={34} h={35} color="#1483e8" sw={3}>
          <path d="M13 11.500h17a2 2 0 0 0 2-2v-5a2 2 0 0 0-2-2H4.500a2 2 0 0 0-2 2V30a2 2 0 0 0 2 2h4a2 2 0 0 0 2-2V11.500H13M17 3v4M23 3v4M10 3v3M3 17h3M3 24h3" />
          <path d="M16.500 17.500l15.500 6-6.500 2.500-2.500 7z" />
        </Icon>
      </Mode>
      <Mode>
        <CodeGlyph />
      </Mode>
    </ModeSwitch>
  </Toolbar>
);

const Board = () => (
  <Canvas>
    <World>
      <Node $x={1001.5} $y={375} $w={170} $h={106}><MintSheet /></Node>
      <Node $x={899} $y={484} $w={326} $h={182}><BrowserShot /></Node>
      <Node $x={1264.5} $y={282} $w={197} $h={109}><TableSheet /></Node>
      <FrameLabel $x={1264} $y={238}>Frame 39</FrameLabel>
      <FrameLabel $x={908} $y={661}>St...</FrameLabel>
      <Node $x={907.5} $y={705} $w={71} $h={163}><PhoneScreen /></Node>
      <Node $x={1253.7} $y={481} $w={666.3} $h={178} $bg="#d6d6d6"><OverlayParts /></Node>
      <Node $x={987} $y={705} $w={267} $h={163} $bg="#d2d2d2" />
      <Node $x={990.5} $y={722} $w={260} $h={139}><MainScreen /></Node>
      <Node $x={1264} $y={694} $w={845.5} $h={191} $bg="#d2d2d2" />
      {[1275, 1559, 1828].map((x, v) => (
        <Node key={x} $x={x} $y={722} $w={259} $h={139}><ViewScreen v={v} /></Node>
      ))}
      <Node $x={1264} $y={921} $w={1940} $h={343} $bg="#d1d1d1" />
      {createLabels.map((_, i) => (
        <Node key={i} $x={frameX(i)} $y={948} $w={259} $h={253}><CreateScreen last={i === 6} /></Node>
      ))}
      <Selection />
      {createLabels.map((label, i) => (
        <FrameLabel key={label} $on $x={frameX(i)} $y={904}>{label}</FrameLabel>
      ))}
      <SectionPill $x={1254} $y={405} $w={133}>Overlay</SectionPill>
      <SectionPill $x={1263} $y={618} $w={97}>View</SectionPill>
      <SectionPill $x={987} $y={629} $w={95}>Main</SectionPill>
      <SectionPill $x={1263.5} $y={846} $w={121}>Create</SectionPill>
      <SectionPill $x={1398.5} $y={846} $w={61} $light><CodeGlyph color="#8a8a8a" sw={2.2} /></SectionPill>
      <FlowTag>
        Flow 1
        <Icon w={31} h={31} color="#14212b">
          <rect x="1.500" y="1.500" width="28" height="28" rx="3" />
          <path d="M2 8.500h27M7 5h1M13 5h11M12.500 14v9.500l7.500-4.700z" />
        </Icon>
      </FlowTag>
      <Handle $x={1265} $y={922} />
      <Handle $x={1265} $y={1263} />
      <Handle $x={3204} $y={922} />
      <Handle $x={3204} $y={1263} />
      <Node $x={0} $y={0} $w={3853} $h={1734}><Wires /></Node>
      <SizeBadge>11403 × 2004</SizeBadge>
    </World>
  </Canvas>
);

const Inspector = () => (
  <RightPanel>
    <PanelTop>
      <UserRow>
        <Avatar>S</Avatar>
        <Chevron />
        <Spacer />
        <Icon w={32} h={37}>
          <path d="M1.500 4.500c0-2.300 2.200-3.700 4.200-2.500l22.600 13.800c1.900 1.200 1.900 3.900 0 5.100L5.700 34.800c-2 1.200-4.200-.2-4.200-2.500z" />
        </Icon>
        <ToolGap $w={37} />
        <Chevron />
        <ShareButton>Share</ShareButton>
      </UserRow>
      <ModeRow>
        <Tab>Design</Tab>
        <Tab $active>Prototype</Tab>
        <Spacer />
        <Zoom>7%</Zoom>
        <Chevron />
      </ModeRow>
    </PanelTop>
    <PanelRow>
      Interactions
      <Wand />
    </PanelRow>
    <SettingsRow>
      <OutlineButton>Show prototype settings</OutlineButton>
    </SettingsRow>
    <Help>?</Help>
  </RightPanel>
);

export default function App() {
  return (
    <Shell>
      <Global />
      <TopEdge />
      <Columns>
        <Sidebar />
        <Center>
          <Corner />
          <TopRuler>
            {topMarks.map(([label, fade], i) => (
              <TopMark key={i} $fade={fade} $first={i === 0}>{label || "\u00a0"}</TopMark>
            ))}
            <TopEdgeValue $x={489}>0</TopEdgeValue>
            <TopEdgeValue $x={2474}>11403</TopEdgeValue>
          </TopRuler>
          <SideRuler>
            {sideMarks.map(([label, fade], i) => (
              <SideMark key={i} $fade={fade} $first={i === 0}><Upright>{label}</Upright></SideMark>
            ))}
            <SideEdgeValue $y={834}>0</SideEdgeValue>
            <SideEdgeValue $y={1219}>2004</SideEdgeValue>
          </SideRuler>
          <Board />
          <Tools />
        </Center>
        <Inspector />
      </Columns>
    </Shell>
  );
}
